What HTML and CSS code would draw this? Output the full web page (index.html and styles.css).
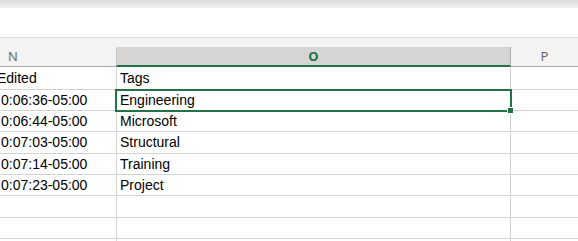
FILE: index.html
```html
<!DOCTYPE html>
<html>
	<head>
		<link rel="stylesheet" href="styles.css">
	</head>
	<body>
		<div class="topbar"></div>
		<div class="formula"></div>
		<div class="strip"></div>

		<div class="sheet">
			<div class="head col-n">N</div>
			<div class="head col-o selected">O</div>
			<div class="head col-p">P</div>

			<div class="cell col-n"><span class="cut-e">Edited</span></div>
			<div class="cell col-o">Tags</div>
			<div class="cell col-p"></div>

			<div class="cell col-n">0:06:36-05:00</div>
			<div class="cell col-o active">Engineering<span class="handle"></span></div>
			<div class="cell col-p"></div>

			<div class="cell col-n">0:06:44-05:00</div>
			<div class="cell col-o">Microsoft</div>
			<div class="cell col-p"></div>

			<div class="cell col-n">0:07:03-05:00</div>
			<div class="cell col-o">Structural</div>
			<div class="cell col-p"></div>

			<div class="cell col-n">0:07:14-05:00</div>
			<div class="cell col-o">Training</div>
			<div class="cell col-p"></div>

			<div class="cell col-n">0:07:23-05:00</div>
			<div class="cell col-o">Project</div>
			<div class="cell col-p"></div>

			<div class="cell col-n"></div>
			<div class="cell col-o"></div>
			<div class="cell col-p"></div>

			<div class="cell col-n"></div>
			<div class="cell col-o"></div>
			<div class="cell col-p"></div>

			<div class="cell col-n"></div>
			<div class="cell col-o"></div>
			<div class="cell col-p"></div>
		</div>
	</body>
</html>
```

FILE: styles.css
```css
body {
	margin: 0;
	background-color: #ffffff;
	font-family: "Liberation Sans", Arial, sans-serif;
	font-size: 14px;
	color: #000000;
	overflow: hidden;
}

.topbar {
	height: 8px;
	background: linear-gradient(#dcdcdc, #efefef);
}

.formula {
	height: 29px;
	background-color: #ffffff;
	border-bottom: 1px solid #e1e1e1;
}

.strip {
	height: 9px;
	background-color: #f3f3f3;
}

.sheet {
	display: grid;
	grid-template-columns: 116px 395px 67px;
	grid-auto-rows: 21.33px;
}

.head {
	height: 20px;
	box-sizing: border-box;
	background-color: #f3f3f3;
	border-bottom: 1px solid #ababab;
	text-align: center;
	line-height: 19px;
	font-family: "Open Sans", sans-serif;
	font-size: 13px;
	color: #616161;
}

.head.col-n {
	text-align: left;
	padding-left: 8px;
}

.head.col-o {
	border-left: 1px solid #c6c6c6;
	border-right: 1px solid #ababab;
}

.head.selected {
	background-color: #d6d5d3;
	border-bottom: 2px solid #217346;
	color: #217346;
	font-weight: bold;
}

.cell {
	box-sizing: border-box;
	border-bottom: 1px solid #d4d4d4;
	line-height: 20px;
	white-space: nowrap;
	overflow: hidden;
	position: relative;
}

.cell.col-n {
	padding-left: 1px;
}

.cell.col-o {
	border-left: 1px solid #d4d4d4;
	border-right: 1px solid #d4d4d4;
	padding-left: 3px;
	overflow: visible;
}

.cut-e {
	margin-left: -4px;
}

.active {
	outline: 2px solid #217346;
	outline-offset: -1px;
	z-index: 1;
}

.handle {
	position: absolute;
	right: -4px;
	bottom: -4px;
	width: 5px;
	height: 5px;
	background-color: #217346;
	border: 1px solid #ffffff;
}
```
